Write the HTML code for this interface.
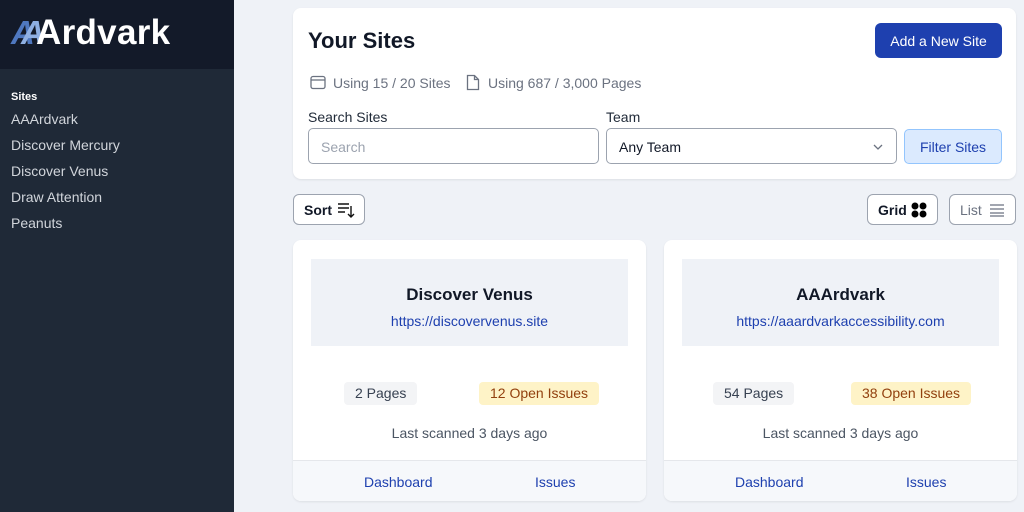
<!DOCTYPE html>
<html><head><meta charset="utf-8"><style>
*{box-sizing:border-box;margin:0;padding:0}
body{width:1024px;height:512px;overflow:hidden;background:#eff2f7;font-family:"Liberation Sans",sans-serif;position:relative;color:#111827}
.side{position:absolute;left:0;top:0;width:234px;height:512px;background:#1f2937}
.logo{height:69px;background:#131a29;position:relative}
.logo .t{position:absolute;left:36px;top:13px;color:#fff;font-size:35px;font-weight:bold;letter-spacing:0.3px}
.logo .a{position:absolute;top:14px;font-size:33px;font-weight:bold;font-style:italic}
.nav{position:absolute;left:11px;top:91px;color:#d1d5db;font-size:14px}
.nav b{display:block;color:#fff;font-size:11px;margin-bottom:8px}
.nav div{height:26px}
.panel{position:absolute;left:293px;top:8px;width:723px;height:171px;background:#fff;border-radius:8px;box-shadow:0 1px 2px rgba(0,0,0,.08)}
h1{position:absolute;left:15px;top:20px;font-size:22px;font-weight:bold}
.add{position:absolute;left:582px;top:15px;width:127px;height:35px;background:#1e40af;color:#fff;border-radius:6px;font-size:14px;text-align:center;line-height:36px}
.usage{position:absolute;top:67px;font-size:14px;color:#6b7280}
.lbl{position:absolute;top:101px;font-size:14px;color:#1f2937}
.inp{position:absolute;top:120px;height:36px;border:1px solid #9ca3af;border-radius:5px;font-size:14px;line-height:36px;padding-left:12px}
.filter{position:absolute;left:611px;top:121px;width:98px;height:35px;background:#dbeafe;border:1px solid #93c5fd;border-radius:5px;color:#1e40af;font-size:14px;text-align:center;line-height:35px}
.btn{position:absolute;top:194px;height:31px;background:#fff;border:1px solid #9ca3af;border-radius:6px;font-size:14px;font-weight:bold;line-height:30px;padding-left:10px}
.card{position:absolute;top:240px;width:353px;height:261px;background:#fff;border-radius:8px;box-shadow:0 1px 2px rgba(0,0,0,.08);overflow:hidden}
.card .in{position:absolute;left:18px;top:19px;width:317px;height:87px;background:#eff2f7;text-align:center}
.card h2{font-size:17px;font-weight:bold;margin-top:26px}
.card .u{color:#1e40af;font-size:14px;margin-top:8px}
.pill{position:absolute;top:142px;height:23px;line-height:23px;font-size:14px;padding:0 11px;border-radius:4px}
.last{position:absolute;top:185px;width:100%;text-align:center;color:#4b5563;font-size:14px}
.foot{position:absolute;top:220px;left:0;width:100%;height:41px;background:#f6f8fb;border-top:1px solid #e5e7eb;color:#1e40af;font-size:14px}
.foot span{position:absolute;top:13px}
</style></head><body>
<div class="side"><div class="logo"><span class="a" style="left:11px;color:#4f78bf">A</span><span class="a" style="left:21px;color:#8fb0e3">A</span><span class="t">Ardvark</span></div>
<div class="nav"><b>Sites</b><div>AAArdvark</div><div>Discover Mercury</div><div>Discover Venus</div><div>Draw Attention</div><div>Peanuts</div></div></div>
<div class="panel"><h1>Your Sites</h1><div class="add">Add a New Site</div>
<svg style="position:absolute;left:17px;top:67px" width="16" height="15" viewBox="0 0 16 15"><rect x="1" y="1.5" width="14" height="12" rx="2" fill="none" stroke="#6b7280" stroke-width="1.3"/><line x1="1" y1="5" x2="15" y2="5" stroke="#6b7280" stroke-width="1.3"/></svg>
<div class="usage" style="left:40px">Using 15 / 20 Sites</div>
<svg style="position:absolute;left:173px;top:66px" width="14" height="17" viewBox="0 0 14 17"><path d="M1.5 1.5h7l4 4v10h-11z M8.5 1.5v4h4" fill="none" stroke="#6b7280" stroke-width="1.3"/></svg>
<div class="usage" style="left:195px">Using 687 / 3,000 Pages</div>
<div class="lbl" style="left:15px">Search Sites</div><div class="lbl" style="left:313px">Team</div>
<div class="inp" style="left:15px;width:291px;color:#9ca3af">Search</div>
<div class="inp" style="left:313px;width:291px">Any Team<svg style="position:absolute;right:13px;top:15px" width="10" height="6"><path d="M1 1l4 4 4-4" fill="none" stroke="#6b7280" stroke-width="1.3"/></svg></div>
<div class="filter">Filter Sites</div></div>
<div class="btn" style="left:293px;width:72px">Sort
<svg style="position:absolute;left:43px;top:7px" width="18" height="16" viewBox="0 0 18 16"><path d="M1 2h11M1 6h11M1 10h7M14 4v11M11 12l3 3 3-3" fill="none" stroke="#111" stroke-width="1.4"/></svg></div>
<div class="btn" style="left:867px;width:71px">Grid
<svg style="position:absolute;left:43px;top:7px" width="16" height="16"><circle cx="4" cy="4" r="3.5"/><circle cx="12" cy="4" r="3.5"/><circle cx="4" cy="12" r="3.5"/><circle cx="12" cy="12" r="3.5"/></svg></div>
<div class="btn" style="left:949px;width:67px;color:#6b7280;font-weight:normal">List
<svg style="position:absolute;left:39px;top:8px" width="16" height="14"><path d="M1 2h14M1 6h14M1 10h14M1 13h14" stroke="#6b7280" stroke-width="1.2"/></svg></div>
<div class="card" style="left:293px"><div class="in"><h2>Discover Venus</h2><div class="u">https://discovervenus.site</div></div>
<div class="pill" style="left:51px;background:#f3f4f6;color:#374151">2 Pages</div>
<div class="pill" style="left:186px;background:#fef3c7;color:#92400e">12 Open Issues</div>
<div class="last">Last scanned 3 days ago</div>
<div class="foot"><span style="left:71px">Dashboard</span><span style="left:242px">Issues</span></div></div>
<div class="card" style="left:664px"><div class="in"><h2>AAArdvark</h2><div class="u">https://aaardvarkaccessibility.com</div></div>
<div class="pill" style="left:49px;background:#f3f4f6;color:#374151">54 Pages</div>
<div class="pill" style="left:187px;background:#fef3c7;color:#92400e">38 Open Issues</div>
<div class="last">Last scanned 3 days ago</div>
<div class="foot"><span style="left:71px">Dashboard</span><span style="left:242px">Issues</span></div></div>
</body></html>
